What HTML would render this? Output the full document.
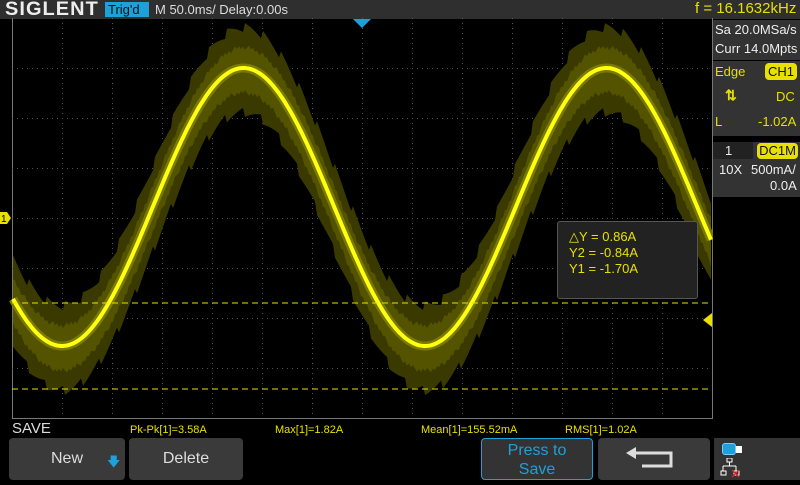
<!DOCTYPE html>
<html><head><meta charset="utf-8"><style>
*{margin:0;padding:0;box-sizing:border-box}
body{width:800px;height:480px;background:#000;position:relative;overflow:hidden;font-family:"Liberation Sans",sans-serif}
.a{position:absolute}
.btn{position:absolute;top:438px;height:42px;background:#3a3a3a;border-radius:4px;color:#ddd;font-size:16px;text-align:center}
</style></head><body>
<div class="a" style="left:0;top:0;width:800px;height:19px;background:#2f2f2f"></div>
<div class="a" style="left:5px;top:-1px;color:#eee;font-size:19px;font-weight:bold;letter-spacing:1px;transform:scaleX(1.05);transform-origin:left">SIGLENT</div>
<div class="a" style="left:105px;top:2px;width:44px;height:15px;background:#1ea0d8;color:#111;font-size:13px;padding-left:3px;line-height:15px">Trig'd</div>
<div class="a" style="left:155px;top:2px;color:#ddd;font-size:13px;line-height:15px">M 50.0ms/ Delay:0.00s</div>
<div class="a" style="left:695px;top:0px;color:#e8e000;font-size:15px;line-height:18px">f = 16.1632kHz</div>
<svg class="a" style="left:0;top:0" width="800" height="480" id="s">
<line x1="12.5" y1="18" x2="12.5" y2="418" stroke="#777"/>
<line x1="712.5" y1="18" x2="712.5" y2="418" stroke="#777"/>
<line x1="12" y1="418.5" x2="713" y2="418.5" stroke="#777"/>
<g id="grid" stroke="#555" stroke-dasharray="1 4"></g>
<g id="wave"></g>
<line x1="12" y1="303" x2="712" y2="303" stroke="#e8e000" stroke-dasharray="6 4"/>
<line x1="12" y1="389" x2="712" y2="389" stroke="#e8e000" stroke-dasharray="6 4"/>
<polygon points="353,19 371,19 362,28" fill="#1ea0d8"/>
<polygon points="0,212 7,212 11,218 7,224 0,224" fill="#e8e000"/>
<text x="1" y="222" font-size="10" fill="#000" font-family="Liberation Sans">1</text>
<polygon points="712,313 712,327 703,320" fill="#e8e000"/>
</svg>
<div class="a" style="left:557px;top:221px;width:141px;height:78px;background:#222;border:1px solid #555;border-radius:3px;color:#e8e000;font-size:13px;line-height:16px;padding:7px 0 0 11px">△Y = 0.86A<br>Y2 = -0.84A<br>Y1 = -1.70A</div>
<div class="a" style="left:713px;top:19px;width:87px;height:400px;background:#000"></div>
<div class="a" style="left:713px;top:20px;width:87px;height:40px;background:#333;color:#eee;font-size:13px;line-height:19px;padding-left:2px">Sa 20.0MSa/s<br>Curr 14.0Mpts</div>
<div class="a" style="left:713px;top:61px;width:87px;height:75px;background:#333"></div>
<div class="a" style="left:715px;top:64px;color:#e8e000;font-size:13px">Edge</div>
<div class="a" style="left:765px;top:63px;width:32px;height:17px;background:#e8e000;border-radius:4px;color:#111;font-size:13px;text-align:center;line-height:17px">CH1</div>
<div class="a" style="left:725px;top:87px;color:#e8e000;font-size:14px;font-weight:bold">⇅</div>
<div class="a" style="left:776px;top:89px;color:#e8e000;font-size:13px">DC</div>
<div class="a" style="left:715px;top:114px;color:#e8e000;font-size:13px">L</div>
<div class="a" style="left:758px;top:114px;color:#e8e000;font-size:13px">-1.02A</div>
<div class="a" style="left:713px;top:142px;width:87px;height:55px;background:#333"></div>
<div class="a" style="left:713px;top:142px;width:40px;height:17px;background:#222;color:#eee;font-size:13px;line-height:17px;padding-left:12px">1</div>
<div class="a" style="left:757px;top:143px;width:41px;height:16px;background:#e8e000;border-radius:4px;color:#111;font-size:13px;text-align:center;line-height:16px">DC1M</div>
<div class="a" style="left:719px;top:162px;color:#eee;font-size:13px">10X</div>
<div class="a" style="left:751px;top:162px;color:#eee;font-size:13px">500mA/</div>
<div class="a" style="left:770px;top:178px;color:#eee;font-size:13px">0.0A</div>
<div class="a" style="left:12px;top:420px;color:#ddd;font-size:15px">SAVE</div>
<div class="a" style="left:130px;top:424px;color:#e8e000;font-size:11px;width:600px"><span class="a" style="left:0">Pk-Pk[1]=3.58A</span><span class="a" style="left:145px">Max[1]=1.82A</span><span class="a" style="left:291px">Mean[1]=155.52mA</span><span class="a" style="left:435px">RMS[1]=1.02A</span></div>
<div class="btn" style="left:9px;width:116px;line-height:42px">New<span class="a" style="left:98px;top:3px;color:#1ea0d8;font-size:13px">🡇</span></div>
<div class="btn" style="left:129px;width:114px;line-height:42px">Delete</div>
<div class="btn" style="left:481px;width:112px;border:1px solid #1ea0d8;background:#333;color:#1ea0d8;line-height:19px;padding-top:2px">Press to<br>Save</div>
<div class="btn" style="left:598px;width:112px"><svg width="112" height="42"><path d="M36 15 H73 V28 H44" fill="none" stroke="#ddd" stroke-width="3"/><polygon points="28,15 38,9 38,21" fill="#ddd"/></svg></div>
<div class="a" style="left:714px;top:438px;width:86px;height:42px;background:#333"></div>
<div class="a" style="left:722px;top:443px;width:14px;height:12px;background:#1ea0d8;border-radius:3px;border:1px solid #7cf"></div>
<div class="a" style="left:736px;top:446px;width:6px;height:7px;background:#fff"></div>
<svg class="a" style="left:720px;top:458px" width="30" height="22"><rect x="7" y="0" width="5" height="4" fill="none" stroke="#fff"/><path d="M9.5 4V8M3 8H16M3 8V13M16 8V13" stroke="#fff"/><rect x="1" y="13" width="5" height="4" fill="none" stroke="#fff"/><rect x="14" y="13" width="5" height="4" fill="none" stroke="#fff"/><path d="M12 12L19 19M19 12L12 19" stroke="#d22" stroke-width="1.3"/></svg>
<script>
var ns="http://www.w3.org/2000/svg",g=document.getElementById('grid'),w=document.getElementById('wave');
for(var x=62;x<712;x+=50){var l=document.createElementNS(ns,'line');l.setAttribute('x1',x+.5);l.setAttribute('x2',x+.5);l.setAttribute('y1',18);l.setAttribute('y2',418);g.appendChild(l);}
for(var y=68;y<418;y+=50){var l=document.createElementNS(ns,'line');l.setAttribute('y1',y+.5);l.setAttribute('y2',y+.5);l.setAttribute('x1',12);l.setAttribute('x2',712);g.appendChild(l);}
function f(x){return 207+139*Math.cos(2*Math.PI*(x-62)/363);}
var up=[],dn=[];for(var x=13;x<=712;x+=2){var j=((x*13)%9)/9*10;up.push(x+','+(f(x)-36-j));dn.unshift(x+','+(f(x)+40+j));}
var p=document.createElementNS(ns,'polygon');p.setAttribute('points',up.concat(dn).join(' '));p.setAttribute('fill','#3a3a00');w.appendChild(p);
var up2=[],dn2=[];for(var x=13;x<=712;x+=2){var j=((x*5)%7)/7*6;up2.push(x+','+(f(x)-18-j));dn2.unshift(x+','+(f(x)+22+j));}
p=document.createElementNS(ns,'polygon');p.setAttribute('points',up2.concat(dn2).join(' '));p.setAttribute('fill','#535300');w.appendChild(p);
var d='M';for(var x=13;x<=712;x+=2){d+=x+' '+f(x).toFixed(1)+' L';}d=d.slice(0,-2);
var q=document.createElementNS(ns,'path');q.setAttribute('d',d);q.setAttribute('fill','none');q.setAttribute('stroke','#7a7a00');q.setAttribute('stroke-width','9');w.appendChild(q);
q=q.cloneNode();q.setAttribute('stroke','#ffff10');q.setAttribute('stroke-width','4');w.appendChild(q);
</script>
</body></html>
